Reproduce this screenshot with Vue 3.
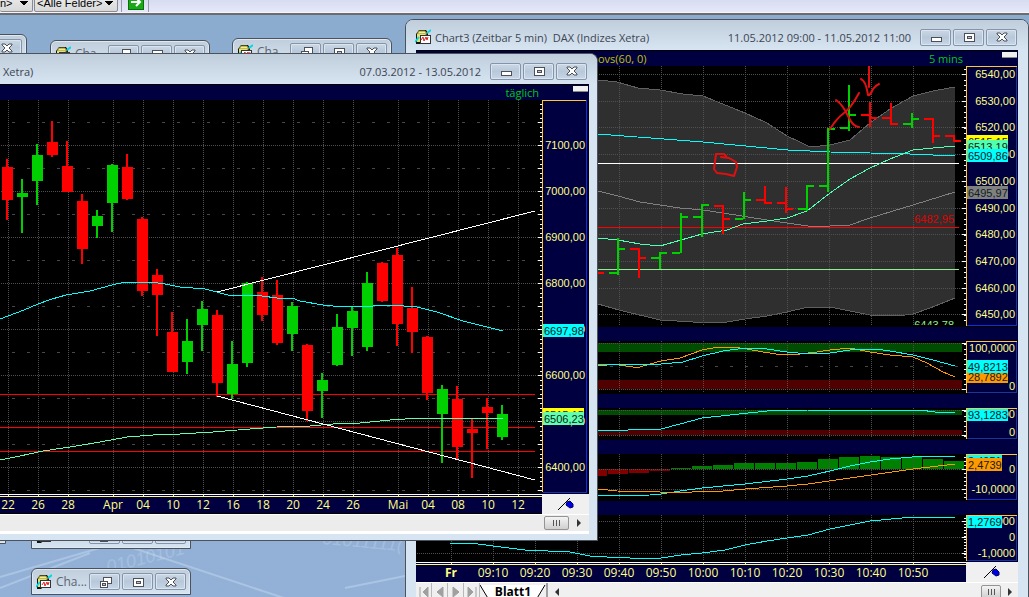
<template>
  <div class="desktop">
    <svg class="defs" width="0" height="0" aria-hidden="true">
      <symbol id="g-min" viewBox="0 0 14 12">
        <rect x="2" y="6" width="10" height="4" fill="#fff" stroke="#4a4f58" shape-rendering="crispEdges" />
      </symbol>
      <symbol id="g-max" viewBox="0 0 14 12">
        <rect x="2" y="2" width="10" height="8" fill="#fff" stroke="#4a4f58" shape-rendering="crispEdges" />
        <rect x="5" y="5" width="4" height="2" fill="#b9c7d8" stroke="#4a4f58" shape-rendering="crispEdges" />
      </symbol>
      <symbol id="g-restore" viewBox="0 0 14 12">
        <g shape-rendering="crispEdges" stroke="#4a4f58">
          <rect x="5" y="1" width="8" height="6" fill="#fff" />
          <rect x="2" y="5" width="7" height="6" fill="#fff" />
          <rect x="4" y="7" width="3" height="2" fill="#b9c7d8" />
        </g>
      </symbol>
      <symbol id="g-close" viewBox="0 0 14 12">
        <path d="M2 2h3l2 2 2-2h3v1L9 6l3 3v1H9L7 8l-2 2H2V9l3-3-3-3z" fill="#fff" stroke="#4a4f58" />
      </symbol>
      <symbol id="g-chart" viewBox="0 0 16 16">
        <path d="M1 15V5l3-4h7l2 3v4l-8 7z" fill="#111" />
        <path d="M4 2h6l2 3H2z" fill="#f2ee9a" stroke="#8a8a20" stroke-width="1" />
        <path d="M2 5h9l-5 8H2z" fill="#e8e070" />
        <path d="M0 13l4-5M12 4l4-3" stroke="#00d8e8" stroke-width="2" />
        <rect x="5" y="6" width="10" height="8" fill="#fff" stroke="#333" shape-rendering="crispEdges" />
        <path d="M6 11l2-3 1 4 2-4 1 3 1-3" fill="none" stroke="#e02020" />
      </symbol>
      <symbol id="g-pin" viewBox="0 0 16 14">
        <path d="M0 13L12 1" stroke="#000" />
        <path d="M9 5l3-1 3 3v3l-3 1-4-3z" fill="#0000e8" stroke="#000060" />
      </symbol>
    </svg>

    <header class="toolbar">
      <select class="combo combo-cut" aria-label="Auswahl"><option>n&gt;</option></select>
      <select class="combo" aria-label="Felder"><option>&lt;Alle Felder&gt;</option></select>
      <i class="sep"></i>
      <button class="go" aria-label="Los">
        <svg width="12" height="12" viewBox="0 0 12 12"><path d="M1 6h9M6 2l4 4-4 4" fill="none" stroke="#fff" stroke-width="2" /></svg>
      </button>
      <i class="sep"></i>
    </header>

    <main class="workspace">
      <svg class="wallpaper" width="420" height="70" viewBox="0 527 420 70" aria-hidden="true">
        <path d="M0 577L110 545M130 547L290 600M345 588L420 573M0 588L90 553" />
        <text x="108" y="573" transform="rotate(-14 108 573)">01010101</text>
        <text x="322" y="544" transform="rotate(5 322 544)" class="bits">01011111(</text>
      </svg>

      <section v-for="(w, i) in minimized" :key="i" class="mini" :style="{ left: w.x + 'px', top: w.y + 'px' }">
        <svg width="16" height="16"><use href="#g-chart" /></svg>
        <span class="mini-title">Cha...</span>
        <button v-for="g in ['restore', 'max', 'close']" :key="g" class="win-btn" :aria-label="g">
          <svg width="14" height="12"><use :href="'#g-' + g" /></svg>
        </button>
      </section>

      <section class="window intraday">
        <div class="titlebar">
          <svg width="16" height="16"><use href="#g-chart" /></svg>
          <span class="title">Chart3 (Zeitbar 5 min)&nbsp; DAX (Indizes Xetra)</span>
          <span class="range">11.05.2012 09:00 - 11.05.2012 11:00</span>
          <button v-for="g in ['min', 'max', 'close']" :key="g" class="win-btn" :aria-label="g">
            <svg width="14" height="12"><use :href="'#g-' + g" /></svg>
          </button>
        </div>
        <div class="client">
          <div class="info">
            <span class="study">ovs(60, 0)</span>
            <span class="period">5 mins</span>
            <i class="grip"></i>
          </div>
          <template v-for="(p, i) in panels" :key="i">
            <div v-if="i" class="strip"></div>
            <div class="panel">
              <svg class="plot" :viewBox="`416 ${p.y} 550 ${p.h}`">
                <template v-if="i === 0">
                  <polygon :points="cloud" fill="#2f2f2f" />
                  <polyline :points="bandTop" class="ln" stroke="#606060" />
                  <polyline :points="bandLow" class="ln" stroke="#606060" />
                </template>
                <rect v-for="b in p.bands" :key="b.y" x="416" :y="b.y" width="546" :height="b.h" :fill="b.c" />
                <rect v-for="b in p.hist" :key="b.x" :x="b.x" :y="b.up ? 469 - b.h : 469" width="20" :height="b.h" :fill="b.up ? '#008000' : '#800000'" />
                <line v-for="x in hours" :key="x" :x1="x" :x2="x" :y1="p.y" :y2="p.y + p.h - 2" class="dot" />
                <line v-for="y in p.grid" :key="y" x1="417" x2="964" :y1="y" :y2="y" class="dot" />
                <line v-for="y in p.dash" :key="y" x1="415" x2="960" :y1="y" :y2="y" class="dash" />
                <line v-for="l in p.levels" :key="l.y" x1="416" x2="959" :y1="l.y" :y2="l.y" class="ln" :stroke="l.c" />
                <polyline v-for="(l, k) in p.lines" :key="k" :points="l.d" class="ln" :stroke="l.c" />
                <template v-if="i === 0">
                  <path v-for="b in bars" :key="b[0]" :d="ohlc(b)" :fill="b[5] ? GREEN : RED" class="crisp" />
                  <text x="954" y="223" text-anchor="end" class="num" fill="#e00000">6482,95</text>
                  <text x="954" y="329" text-anchor="end" class="num" fill="#90ee90">6443,78</text>
                  <rect x="900" y="325" width="66" height="2" fill="#000" />
                  <g class="pen">
                    <path d="M726 156l-2-2h-8l-2 15 3 4 9 1 8 2 3-9-1-5-7-4-8-1" />
                    <path d="M836 100q7 5 12 16t11 11M859 93q-8 15-15 20t-14 16" />
                    <path d="M869 65v22M861 79q5 2 7 16 2 1 5-6 2-3 6-5" />
                  </g>
                </template>
                <line v-for="y in ticks(p)" :key="'t' + y" x1="964" x2="966" :y1="y" :y2="y" class="ln" stroke="#fff" />
                <line v-for="y in p.grid" :key="'g' + y" x1="962" x2="966" :y1="y" :y2="y" class="ln" stroke="#fff" />
              </svg>
              <svg class="scale" :viewBox="`966 ${p.y} 52 ${p.h}`">
                <rect x="966" :y="p.y" width="52" :height="p.h" fill="#000" />
                <rect x="966" :y="p.y" width="51" :height="p.h - 1" fill="#000040" />
                <text v-for="l in p.labels" :key="l[1]" x="1015" :y="l[0] + 4" text-anchor="end" class="num" fill="#ffff80">{{ l[1] }}</text>
                <g v-for="t in p.tags" :key="t.t">
                  <rect x="967" :y="t.y" :width="t.w || 41" height="13" :fill="t.c" />
                  <text x="968" :y="t.y + 11" class="num" fill="#102020">{{ t.t }}</text>
                </g>
                <path :d="`M966 ${p.y + p.h - 1}V${p.y}h51v1h-50v${p.h - 2}z`" fill="#ffc830" />
                <path :d="`M1017 ${p.y + 1}v${p.h - 2}h-50v-1h49v${3 - p.h}z`" fill="#1030d0" />
              </svg>
            </div>
          </template>
          <div class="panel">
            <svg class="plot" viewBox="416 562 550 20">
              <rect x="416" y="562" width="550" height="20" fill="#000040" />
              <path d="M416 562h550v1h-550z" fill="#fff" />
              <path d="M416 564h550v1h-550z" fill="#ffff80" />
              <line v-for="x in hours" :key="x" :x1="x" :x2="x" y1="562" y2="565" class="ln" stroke="#ffff80" />
              <text v-for="(t, k) in times" :key="t" :x="hours[k]" y="577" text-anchor="middle" class="time" :font-weight="k ? 400 : 700">{{ t }}</text>
            </svg>
            <div class="corner"><svg width="16" height="14"><use href="#g-pin" /></svg></div>
          </div>
          <footer class="sheets">
            <button v-for="(d, k) in navGlyphs" :key="k" class="nav" aria-label="Blatt wechseln">
              <svg width="12" height="12" viewBox="0 0 12 12"><path :d="d" fill="#a0a0a0" stroke="#a0a0a0" /></svg>
            </button>
            <button class="sheet">
              <svg width="66" height="15" viewBox="0 0 66 15"><path d="M0 0l9 15h47l9-15z" fill="#fff" /><path d="M0 0l9 15M56 15l9-15" stroke="#000" fill="none" /></svg>
              <span>Blatt1</span>
            </button>
            <i class="splitter"></i>
            <button class="arrow" aria-label="links"><svg width="5" height="8" viewBox="0 0 5 8"><path d="M4 0v8L0 4z" fill="#333" /></svg></button>
            <button class="thumb thumb-small" aria-label="Bildlauf"><i></i><i></i><i></i></button>
            <button class="arrow" aria-label="rechts"><svg width="5" height="8" viewBox="0 0 5 8"><path d="M0 0v8l4-4z" fill="#333" /></svg></button>
          </footer>
        </div>
      </section>

      <section class="window daily">
        <div class="titlebar">
          <span class="title">Xetra)</span>
          <span class="range">07.03.2012 - 13.05.2012</span>
          <button v-for="g in ['min', 'max', 'close']" :key="g" class="win-btn" :aria-label="g">
            <svg width="14" height="12"><use :href="'#g-' + g" /></svg>
          </button>
        </div>
        <div class="client">
          <div class="info">
            <span class="period">täglich</span>
            <i class="grip"></i>
          </div>
          <div class="panel">
            <svg class="plot" viewBox="0 100 542 394">
              <line v-for="d in days" :key="d[0]" :x1="d[0]" :x2="d[0]" y1="100" y2="493" class="dot" />
              <line v-for="y in dayMajor" :key="y" x1="1" x2="538" :y1="y" :y2="y" class="dot" />
              <line v-for="y in dayMinor" :key="y" x1="12" x2="538" :y1="y" :y2="y" class="dash" />
              <line v-for="y in [394, 427, 451]" :key="y" x1="0" x2="535" :y1="y" :y2="y" class="ln" stroke="#f00" />
              <g v-for="(c, k) in candles" :key="k" :fill="c[4] ? GREEN : RED" class="crisp">
                <rect :x="6 + 15 * k" :y="c[0]" width="2" :height="c[3] - c[0]" />
                <rect :x="2 + 15 * k" :y="c[1]" width="11" :height="c[2] - c[1]" />
              </g>
              <polyline class="ln" stroke="#00ffff" points="0,319 8,316 24,310 38,304 52,299 66,295 90,291 112,285 125,282 150,282 165,284 180,287 205,289 232,296 250,295 262,296 277,298 292,298 300,301 323,305 333,306 373,306 380,305 390,305 417,307 437,312 463,321 483,326 503,331" />
              <polyline class="ln" stroke="#60ffb0" points="0,460 20,456 43,451 70,447 100,442 127,437 153,435 180,434 213,432 250,429 290,426 310,426 333,424 360,423 390,420 420,418 503,418" />
              <path class="ln" stroke="#fff" d="M217 292L535 211M217 396L535 480" />
              <line v-for="y in dayTicks" :key="'t' + y" x1="540" x2="542" :y1="y" :y2="y" class="ln" stroke="#fff" />
              <line v-for="y in dayMajor.concat(dayMinor)" :key="'m' + y" x1="538" x2="542" :y1="y" :y2="y" class="ln" stroke="#fff" />
            </svg>
            <svg class="scale" viewBox="542 100 47 394">
              <rect x="542" y="100" width="47" height="394" fill="#000" />
              <rect x="542" y="100" width="46" height="393" fill="#000040" />
              <text v-for="(y, k) in dayMajor" :key="y" x="585" :y="y + 4" text-anchor="end" class="num" fill="#ffff80">{{ 7100 - 100 * k }},00</text>
              <rect x="543" y="324" width="41" height="13" fill="#00ffff" />
              <text x="544" y="335" class="num" fill="#102020">6697,98</text>
              <rect x="543" y="408" width="41" height="13" fill="#ffff00" />
              <text x="544" y="419" class="num" fill="#102020">6515,15</text>
              <rect x="543" y="412" width="41" height="13" fill="#60ffb0" />
              <text x="544" y="423" class="num" fill="#102020">6506,23</text>
              <path d="M542 492V100h44v1h-43v391z" fill="#ffc830" />
              <path d="M587 100v393h-44v-1h43V100z" fill="#1030d0" />
            </svg>
          </div>
          <div class="panel">
            <svg class="plot" viewBox="0 494 542 20">
              <rect x="0" y="494" width="542" height="20" fill="#000040" />
              <path d="M0 494h542v1H0z" fill="#fff" />
              <path d="M0 496h542v1H0z" fill="#ffff80" />
              <path d="M0 513h542v1H0z" fill="#000" />
              <line v-for="d in days" :key="d[0]" :x1="d[0]" :x2="d[0]" y1="494" y2="497" class="ln" stroke="#ffff80" />
              <text v-for="d in days" :key="'l' + d[0]" :x="d[0]" y="509" text-anchor="middle" class="time">{{ d[1] }}</text>
            </svg>
            <div class="corner"><svg width="16" height="14"><use href="#g-pin" /></svg></div>
          </div>
          <footer class="scroll">
            <button class="thumb" aria-label="Bildlauf"><i></i><i></i><i></i></button>
            <button class="arrow" aria-label="rechts"><svg width="5" height="8" viewBox="0 0 5 8"><path d="M0 0v8l4-4z" fill="#333" /></svg></button>
          </footer>
        </div>
      </section>
    </main>
  </div>
</template>

<script setup>
const GREEN = '#00d000'
const RED = '#ff0000'
const CYAN = '#00ffff'
const ORANGE = '#ff9900'
const MINT = '#50ffb0'

// positions are relative to the workspace below the toolbar
const minimized = [
  { x: -133, y: 19 },
  { x: 50, y: 25 },
  { x: 232, y: 23 },
  { x: -154, y: 502 },
  { x: 31, y: 507 },
  { x: 31, y: 553 },
]

// daily chart: [high, body top, body bottom, low, rising]
const candles = [
  [159, 167, 200, 220, 0], [179, 193, 197, 233, 1], [144, 155, 181, 205, 1], [121, 142, 155, 157, 0],
  [141, 166, 192, 192, 0], [194, 201, 249, 264, 0], [210, 216, 226, 238, 1], [164, 165, 203, 232, 1],
  [154, 167, 199, 200, 0], [217, 219, 291, 296, 0], [269, 275, 295, 336, 0], [312, 332, 372, 372, 0],
  [319, 341, 362, 374, 1], [301, 309, 325, 351, 1], [310, 315, 383, 397, 0], [341, 364, 394, 399, 1],
  [282, 283, 363, 367, 1], [277, 292, 315, 321, 0], [280, 295, 343, 345, 0], [302, 306, 334, 351, 1],
  [344, 345, 411, 421, 0], [373, 380, 391, 418, 1], [314, 327, 365, 366, 1], [307, 311, 328, 356, 1],
  [272, 283, 347, 351, 1], [262, 263, 301, 302, 0], [248, 255, 324, 346, 0], [287, 308, 332, 353, 0],
  [336, 337, 393, 400, 0], [385, 389, 414, 463, 1], [386, 399, 447, 459, 0], [419, 429, 433, 478, 0],
  [398, 407, 413, 449, 0], [405, 414, 437, 440, 1],
]
const days = [
  [8, '22'], [38, '26'], [68, '28'], [113, 'Apr'], [143, '04'], [173, '10'], [203, '12'], [233, '16'], [263, '18'],
  [293, '20'], [323, '24'], [353, '26'], [398, 'Mai'], [428, '04'], [458, '08'], [488, '10'], [518, '12'],
]
const dayMajor = Array.from({ length: 8 }, (_, k) => 145 + 46 * k)
const dayMinor = Array.from({ length: 9 }, (_, k) => 122 + 46 * k)
const dayTicks = Array.from({ length: 84 }, (_, k) => Math.round(104 + 4.6 * k))

// intraday chart: [x, high, low, open, close, rising]
const bars = [
  [596, 272, 273, 272, 272, 0], [617, 238, 275, 272, 248, 1], [638, 248, 278, 248, 257, 0], [659, 252, 269, 257, 252, 1],
  [680, 213, 253, 252, 216, 1], [701, 204, 237, 216, 204, 1], [722, 205, 234, 205, 218, 0], [743, 192, 219, 218, 199, 1],
  [764, 186, 203, 199, 202, 0], [785, 187, 213, 202, 208, 0], [806, 185, 211, 208, 185, 1], [827, 128, 192, 185, 128, 1],
  [848, 85, 131, 127, 114, 1], [869, 102, 127, 114, 117, 0], [890, 103, 124, 117, 123, 0], [911, 113, 128, 123, 118, 1],
  [932, 118, 143, 118, 135, 0], [953, 135, 141, 135, 140, 0],
]
const ohlc = ([x, high, low, open, close]) =>
  `M${x - 8} ${open}h8v2h-8zM${x} ${high}h2V${low}h-2zM${x} ${close}h8v2h-8z`

const bandTop = '416,70 560,76 598,80 617,82 638,88 660,90 683,94 703,96 745,113 767,123 787,136 800,142 808,146 820,146 830,145 850,140 870,123 890,109 913,96 933,91 955,87'
const bandLow = '416,270 560,296 598,304 619,310 660,320 693,322 727,322 745,319 767,316 787,312 808,307 830,307 850,311 870,315 897,316 913,314 930,308 955,298'
const cloud = bandTop + ' ' + bandLow.split(' ').reverse().join(' ')

const hours = Array.from({ length: 12 }, (_, k) => 451 + 42 * k)
const times = ['Fr', '09:10', '09:20', '09:30', '09:40', '09:50', '10:00', '10:10', '10:20', '10:30', '10:40', '10:50']

const histogram = [-7, -5, -4, -2, 1, 3, 4, 6, 6, 6, 7, 10, 12, 13, 12, 12, 10, 8]

const panels = [
  {
    y: 66, h: 261, step: 5.34,
    grid: [74, 101, 127, 154, 181, 208, 234, 261, 288, 314],
    labels: [[74, '6540,00'], [101, '6530,00'], [127, '6520,00'], [154, '6510,00'], [181, '6500,00'], [208, '6490,00'], [234, '6480,00'], [261, '6470,00'], [288, '6460,00'], [314, '6450,00']],
    tags: [
      { y: 135, t: '6515,15', c: '#ffff00' },
      { y: 140, t: '6513,19', c: MINT },
      { y: 149, t: '6509,86', c: CYAN },
      { y: 186, t: '6495,97', c: '#808080' },
    ],
    levels: [{ y: 163, c: '#fff' }, { y: 227, c: '#ff0000' }, { y: 269, c: '#90ee90' }],
    lines: [
      { c: '#808080', d: '598,191 618,196 640,202 680,208 703,210 723,213 767,220 787,223 808,226 830,226 850,225 870,218 913,205 955,192' },
      { c: CYAN, d: '598,134 703,142 788,150 810,151 830,152 870,153 910,154 955,156' },
      { c: MINT, d: '598,238 618,240 640,244 660,246 681,240 702,234 727,230 743,224 767,221 787,218 807,211 830,193 850,179 870,168 890,159 913,150 933,148 955,146' },
    ],
  },
  {
    y: 341, h: 53, step: 5,
    bands: [{ y: 343, h: 9, c: '#004c00' }, { y: 380, h: 9, c: '#500000' }],
    grid: [343, 389], dash: [366],
    labels: [[348, '100,0000'], [386, '0']],
    tags: [{ y: 370, t: '28,7892', c: ORANGE }, { y: 360, t: '49,8213', c: CYAN }],
    lines: [
      { c: ORANGE, d: '598,364 619,365 633,367 640,367 650,364 661,361 680,358 702,350 718,347 733,347 747,349 763,352 783,355 800,354 817,352 830,350 850,348 870,352 890,355 913,357 927,363 943,372 955,377' },
      { c: CYAN, d: '598,366 617,364 645,365 661,364 683,362 702,356 723,351 745,348 767,349 787,352 808,354 830,353 850,350 876,349 890,351 913,355 933,360 955,366' },
    ],
  },
  {
    y: 408, h: 32, step: 5,
    bands: [{ y: 410, h: 5, c: '#004c00' }, { y: 430, h: 5, c: '#500000' }],
    grid: [410, 435],
    labels: [[414, '100,0000'], [432, '0']],
    tags: [{ y: 408, t: '93,1283', c: CYAN }],
    lines: [{ c: CYAN, d: '598,431 628,430 661,429 680,424 702,418 730,415 767,411 808,410 920,410 935,412 955,412' }],
  },
  {
    y: 454, h: 47, step: 4,
    hist: histogram.map((v, k) => ({ x: 587 + 21 * k, h: Math.abs(v), up: v > 0 })),
    grid: [469, 489],
    labels: [[469, '0'], [489, '-10,0000']],
    tags: [{ y: 454, t: '3,4951', c: CYAN, w: 35 }, { y: 458, t: '2,4739', c: ORANGE, w: 35 }],
    lines: [
      { c: CYAN, d: '598,496 650,495 661,494 680,491 702,488 745,484 787,479 808,476 830,471 850,466 870,462 890,459 923,456 955,456' },
      { c: ORANGE, d: '598,489 617,491 660,492 692,492 723,491 745,489 787,486 808,484 913,469 955,464' },
    ],
  },
  {
    y: 515, h: 47, step: 3,
    grid: [521, 537, 553],
    labels: [[521, '1,0000'], [537, '0'], [553, '-1,0000']],
    tags: [{ y: 515, t: '1,2769', c: CYAN, w: 35 }],
    lines: [{ c: CYAN, d: '450,543 478,544 493,546 525,550 570,552 590,556 607,557 630,558 661,558 681,555 702,553 725,550 745,545 767,541 787,538 808,535 830,529 870,521 913,517 955,517' }],
  },
]

function ticks(p) {
  const out = []
  for (let y = p.y + 3; y < p.y + p.h - 2; y += p.step) out.push(Math.round(y))
  return out
}

const navGlyphs = [
  'M2 1v10M10 1v10L5 6z',
  'M9 1v10L3 6z',
  'M3 1v10l6-5z',
  'M2 1v10l5-5zM10 1v10',
]
</script>

<style>
body {
  background: #8cabcf;
}
</style>

<style scoped>
.desktop {
  height: 100vh;
  display: flex;
  flex-direction: column;
  overflow: hidden;
  font-family: "Open Sans", "Noto Sans", sans-serif;
  font-size: 12px;
  color: #3c4654;
}

.defs {
  position: absolute;
}

button {
  padding: 0;
  margin: 0;
  border: 0;
  background: none;
  font: inherit;
}

.toolbar {
  flex: none;
  height: 12px;
  display: flex;
  align-items: flex-end;
  gap: 3px;
  background: linear-gradient(#d8dcf0, #e4e8f8);
  border-bottom: 1px solid #f4f4fa;
  box-shadow: 0 2px 0 #6c6c70;
  margin-bottom: 2px;
}

.combo {
  appearance: none;
  width: 84px;
  height: 20px;
  padding: 1px 2px 0;
  border: 1px solid #8a8a90;
  border-radius: 2px;
  background: linear-gradient(45deg, transparent 50%, #000 50%) 70px 7px / 4px 5px no-repeat,
    linear-gradient(-45deg, transparent 50%, #000 50%) 74px 7px / 4px 5px no-repeat,
    linear-gradient(#f0f0f0, #d8d8d8);
  background:
    conic-gradient(from -45deg at 50% 100%, #000 0 90deg, transparent 0) 0 0 / 0 0 no-repeat,
    conic-gradient(from -40deg at 50% 100%, #000 80deg, transparent 0) 70px 8px / 8px 5px no-repeat,
    linear-gradient(#f0f0f0, #d8d8d8);
  background:
    linear-gradient(#000, #000) 70px 8px / 8px 1px no-repeat,
    linear-gradient(#000, #000) 71px 9px / 6px 1px no-repeat,
    linear-gradient(#000, #000) 72px 10px / 4px 1px no-repeat,
    linear-gradient(#000, #000) 73px 11px / 2px 1px no-repeat,
    linear-gradient(#f0f0f0, #d8d8d8);
  font-family: "Liberation Sans", sans-serif;
  font-size: 11px;
  color: #000;
}

.combo-cut {
  width: 33px;
  margin-right: -2px;
  padding-left: 0;
  border-left: 0;
  background-position: 20px 8px, 21px 9px, 22px 10px, 23px 11px, 0 0;
}

.sep {
  width: 1px;
  height: 12px;
  background: #9a9aa8;
}

.go {
  width: 16px;
  height: 16px;
  margin: 0 1px 2px 3px;
  background: #18a818;
  border: 1px solid #087008;
}

.go svg {
  display: block;
  margin: 1px;
}

.workspace {
  position: relative;
  flex: 1;
  overflow: hidden;
  background: linear-gradient(#8babcf, #93b1d7);
}

.wallpaper {
  position: absolute;
  left: 0;
  bottom: 0;
}

.wallpaper path {
  stroke: #c8dcf2;
  stroke-width: 2;
  opacity: 0.45;
}

.wallpaper text {
  font: italic 18px "Liberation Sans", sans-serif;
  fill: #dbe8f6;
  opacity: 0.25;
}

.mini {
  position: absolute;
  box-sizing: border-box;
  width: 160px;
  height: 27px;
  padding: 0 4px;
  display: flex;
  align-items: center;
  gap: 2px;
  border: 1px solid #4c525c;
  border-radius: 6px 6px 0 0;
  background: linear-gradient(#c0cdda, #d6e3f0);
  box-shadow: inset 0 0 0 1px #dfe9f3;
}

.mini-title {
  flex: 1;
  padding-left: 2px;
  color: #5c6673;
  white-space: nowrap;
}

.win-btn {
  flex: none;
  box-sizing: border-box;
  width: 31px;
  height: 17px;
  display: flex;
  align-items: center;
  justify-content: center;
  border: 1px solid #8494ab;
  border-radius: 2px;
  background: linear-gradient(#cbd7e4, #b8c8da 50%, #c8d6e6);
  box-shadow: inset 0 0 0 1px #dbe5ef;
}

.window {
  position: absolute;
  box-sizing: border-box;
  border: 1px solid #4c525c;
  background: #d7e4f1;
}

.intraday {
  left: 405px;
  right: 0;
  top: 4px;
  padding: 0 10px;
  border-radius: 8px 8px 0 0;
}

.daily {
  left: 0;
  top: 38px;
  width: 598px;
  padding: 0 8px 6px 0;
  border-left: 0;
  border-radius: 0 8px 0 0;
}

.titlebar {
  height: 30px;
  display: flex;
  align-items: center;
  gap: 2px;
  margin: 0 -10px;
  padding: 4px 11px 0 9px;
  border-radius: 7px 7px 0 0;
  background: linear-gradient(#c0cddb, #d7e4f1);
  box-sizing: border-box;
  font-size: 11px;
}

.daily .titlebar {
  margin: 0 -8px 0 0;
  padding: 4px 10px 0 3px;
  border-radius: 0 7px 0 0;
}

.title {
  flex: 1;
  white-space: nowrap;
}

.intraday .title {
  padding-left: 2px;
}

.range {
  padding-right: 7px;
  white-space: nowrap;
}

.client {
  background: #f0f0f0;
  border-top: 1px solid #000;
}

.daily .client {
  border-bottom: 3px solid #fff;
}

.info {
  height: 15px;
  display: flex;
  background: #000040;
  font-size: 11px;
  line-height: 16px;
}

.study {
  padding-left: 182px;
  color: #c0c000;
}

.period {
  margin-left: auto;
  padding-right: 39px;
  color: #00c814;
}

.daily .period {
  padding-right: 34px;
}

.grip {
  width: 15px;
  height: 6px;
  margin: 1px 1px 0 0;
  background: #f0f0f0;
  border-bottom: 1px solid #888;
  box-sizing: border-box;
}

.strip {
  height: 14px;
  background: #000040;
}

.panel {
  display: grid;
  grid-template-columns: 1fr 52px;
}

.daily .panel {
  grid-template-columns: 1fr 47px;
}

.plot,
.scale {
  display: block;
  width: 100%;
  background: #000;
}

.corner {
  display: flex;
  align-items: center;
  justify-content: center;
}

.ln,
.dot,
.dash {
  fill: none;
  stroke-width: 1;
  shape-rendering: crispEdges;
}

.crisp {
  shape-rendering: crispEdges;
}

.dot {
  stroke: #505050;
  stroke-dasharray: 1 1;
}

.dash {
  stroke: #484848;
  stroke-dasharray: 3 12;
}

.pen path {
  fill: none;
  stroke: #e01010;
  stroke-width: 2;
  stroke-linecap: round;
  stroke-linejoin: round;
}

.num {
  font: 11px "Liberation Sans", Arial, sans-serif;
}

.time {
  font-family: "Open Sans", "Noto Sans", sans-serif;
  font-size: 12px;
  fill: #ffff80;
}

.scroll {
  height: 17px;
  display: flex;
  justify-content: flex-end;
  align-items: center;
  gap: 6px;
  padding-right: 6px;
  background: #ececec;
  border-top: 1px solid #fff;
  box-sizing: border-box;
}

.thumb {
  box-sizing: border-box;
  width: 25px;
  height: 14px;
  display: flex;
  align-items: center;
  justify-content: center;
  gap: 2px;
  border: 1px solid #949494;
  border-radius: 2px;
  background: linear-gradient(#f4f4f4, #cfcfcf);
}

.thumb i {
  width: 1px;
  height: 6px;
  background: #555;
}

.thumb-small {
  width: 20px;
  margin-left: auto;
}

.arrow {
  width: 8px;
  height: 14px;
  display: flex;
  align-items: center;
  justify-content: center;
}

.sheets {
  height: 18px;
  display: flex;
  align-items: center;
  padding-right: 4px;
  background: #f0f0f0;
  border-top: 1px solid #fff;
}

.sheets .arrow {
  margin: 0 0 0 5px;
}

.nav {
  width: 16px;
  height: 18px;
  display: flex;
  align-items: center;
  justify-content: center;
  border-right: 1px solid #b8b8b8;
  box-sizing: border-box;
}

.sheet {
  display: grid;
  place-items: center;
  height: 16px;
  font-size: 12px;
  line-height: 14px;
  font-weight: 700;
  color: #000;
}

.sheet > * {
  grid-area: 1 / 1;
}

.splitter {
  width: 2px;
  height: 18px;
  background: #a0a0a0;
}
</style>
